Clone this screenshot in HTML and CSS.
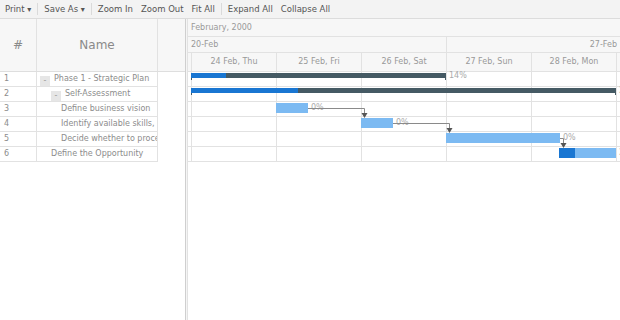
FILE: index.html
```html
<!DOCTYPE html>
<html lang="en">
<head>
  <meta charset="UTF-8">
  <title>Project Gantt</title>
  <link rel="stylesheet" href="styles.css">
</head>
<body>

<div class="toolbar">
  <span class="tb-btn">Print <span class="caret">&#9662;</span></span>
  <span class="tb-sep"></span>
  <span class="tb-btn">Save As <span class="caret">&#9662;</span></span>
  <span class="tb-sep"></span>
  <span class="tb-btn">Zoom In</span>
  <span class="tb-btn">Zoom Out</span>
  <span class="tb-btn">Fit All</span>
  <span class="tb-sep"></span>
  <span class="tb-btn">Expand All</span>
  <span class="tb-btn">Collapse All</span>
</div>

<div class="gantt">

  <!-- data grid -->
  <div class="grid-pane">
    <div class="grid-head">
      <div class="col-num">#</div>
      <div class="col-name">Name</div>
      <div class="col-blank"></div>
    </div>
    <div class="grid-row"><div class="cell-num">1</div><div class="cell-name lvl0"><span class="toggle">-</span>Phase 1 - Strategic Plan</div></div>
    <div class="grid-row"><div class="cell-num">2</div><div class="cell-name lvl1"><span class="toggle">-</span>Self-Assessment</div></div>
    <div class="grid-row"><div class="cell-num">3</div><div class="cell-name lvl2">Define business vision</div></div>
    <div class="grid-row"><div class="cell-num">4</div><div class="cell-name lvl2">Identify available skills, information and support</div></div>
    <div class="grid-row"><div class="cell-num">5</div><div class="cell-name lvl2">Decide whether to proceed</div></div>
    <div class="grid-row"><div class="cell-num">6</div><div class="cell-name lvl1">Define the Opportunity</div></div>
  </div>

  <div class="splitter"></div>

  <!-- timeline -->
  <div class="timeline">
    <div class="tl-month">February, 2000</div>
    <div class="tl-week">
      <div class="week first">20-Feb</div>
      <div class="week last">27-Feb</div>
    </div>
    <div class="tl-days">
      <div class="day part"></div>
      <div class="day">24 Feb, Thu</div>
      <div class="day">25 Feb, Fri</div>
      <div class="day">26 Feb, Sat</div>
      <div class="day">27 Feb, Sun</div>
      <div class="day">28 Feb, Mon</div>
      <div class="day">29 Feb, Tue</div>
    </div>

    <div class="tl-body">
      <div class="tl-row">
        <div class="bar summary" style="left: 3px; width: 255px;"><div class="progress" style="width: 35px;"></div></div>
        <span class="bar-label summary-label" style="left: 261px;">14%</span>
      </div>
      <div class="tl-row">
        <div class="bar summary" style="left: 3px; width: 425px;"><div class="progress" style="width: 107px;"></div></div>
        <span class="bar-label summary-label" style="left: 431px;">25%</span>
      </div>
      <div class="tl-row">
        <div class="bar task" style="left: 88px; width: 32px;"></div>
        <span class="bar-label" style="left: 123px;">0%</span>
      </div>
      <div class="tl-row">
        <div class="bar task" style="left: 173px; width: 32px;"></div>
        <span class="bar-label" style="left: 208px;">0%</span>
      </div>
      <div class="tl-row">
        <div class="bar task" style="left: 258px; width: 114px;"></div>
        <span class="bar-label" style="left: 375px;">0%</span>
      </div>
      <div class="tl-row">
        <div class="bar task" style="left: 371px; width: 57px;"><div class="progress" style="width: 16px;"></div></div>
        <span class="bar-label" style="left: 431px;">28%</span>
      </div>

      <!-- dependency connectors -->
      <svg class="links" width="432" height="100" viewBox="0 0 432 100">
        <g fill="none" stroke="#8a8a8a" stroke-width="1">
          <path d="M120 36.5 H176.5 V42"/>
          <path d="M205 51.5 H261.5 V57"/>
          <path d="M372 66.5 H375.5 V72"/>
        </g>
        <g fill="#555">
          <polygon points="173.5,41 179.5,41 176.5,46"/>
          <polygon points="258.5,56 264.5,56 261.5,61"/>
          <polygon points="372.5,71 378.5,71 375.5,76"/>
        </g>
      </svg>
    </div>
  </div>

</div>

</body>
</html>
```

FILE: styles.css
```css
body {
  margin: 0;
  font-family: "DejaVu Sans", sans-serif;
  color: #8c8c8c;
  background-color: #fff;
  width: 620px;
  height: 320px;
  overflow: hidden;
}
.toolbar {
  height: 18px;
  background-color: #f3f3f3;
  border-bottom: 1px solid #dcdcdc;
  display: flex;
  align-items: center;
  padding-left: 1px;
  font-size: 8.5px;
  color: #555;
  white-space: nowrap;
}
.tb-btn {
  padding: 0 4px;
}
.caret {
  font-size: 8px;
}
.tb-sep {
  width: 1px;
  height: 12px;
  background-color: #dadada;
  margin: 0 2px;
}
.gantt {
  display: flex;
  height: 301px;
}

/* data grid */
.grid-pane {
  width: 185px;
  flex-shrink: 0;
}
.grid-head {
  display: flex;
  height: 52px;
  background-color: #f7f7f7;
  border-bottom: 1px solid #dedede;
  font-size: 12px;
  color: #8a8a8a;
}
.grid-head div {
  display: flex;
  align-items: center;
  justify-content: center;
  box-sizing: border-box;
}
.col-num {
  width: 37px;
  border-right: 1px solid #e2e2e2;
}
.col-name {
  width: 121px;
  border-right: 1px solid #e2e2e2;
}
.col-blank {
  flex: 1;
}
.grid-row {
  display: flex;
  width: 158px;
  height: 14px;
  border-bottom: 1px solid #e2e2e2;
  font-size: 8px;
  line-height: 14px;
}
.cell-num {
  width: 37px;
  box-sizing: border-box;
  padding-left: 4px;
  border-right: 1px solid #e2e2e2;
}
.cell-name {
  width: 121px;
  box-sizing: border-box;
  border-right: 1px solid #e2e2e2;
  white-space: nowrap;
  overflow: hidden;
}
.lvl0 { padding-left: 3px; }
.lvl1 { padding-left: 14px; }
.lvl2 { padding-left: 24px; }
.toggle {
  display: inline-block;
  width: 10px;
  height: 10px;
  margin-right: 4px;
  background-color: #e6e6e6;
  color: #999;
  font-size: 8px;
  line-height: 10px;
  text-align: center;
  vertical-align: -2px;
}
.splitter {
  width: 1px;
  border-left: 1px solid #cfcfcf;
  background-color: #f5f5f5;
  flex-shrink: 0;
}

/* timeline */
.timeline {
  flex: 1;
  border-left: 1px solid #e2e2e2;
  overflow: hidden;
  font-size: 8px;
  color: #999;
}
.tl-month,
.tl-week,
.tl-days {
  background-color: #f7f7f7;
  border-bottom: 1px solid #e2e2e2;
  white-space: nowrap;
}
.tl-month {
  height: 17px;
  line-height: 17px;
  padding-left: 3px;
}
.tl-week {
  display: flex;
  height: 15px;
  line-height: 15px;
}
.week.first {
  width: 259px;
  flex-shrink: 0;
  box-sizing: border-box;
  padding-left: 3px;
  border-right: 1px solid #e2e2e2;
}
.week.last {
  flex: 1;
  text-align: right;
  padding-right: 3px;
}
.tl-days {
  display: flex;
  height: 18px;
  line-height: 18px;
}
.day {
  width: 85px;
  flex-shrink: 0;
  box-sizing: border-box;
  border-right: 1px solid #e2e2e2;
  text-align: center;
}
.day.part {
  width: 4px;
}
.tl-body {
  position: relative;
}
.tl-row {
  position: relative;
  height: 14px;
  border-bottom: 1px solid #e2e2e2;
  background-image: linear-gradient(to right, #e2e2e2 1px, transparent 1px);
  background-size: 85px 100%;
  background-position: 3px 0;
}
.bar {
  position: absolute;
  top: 1px;
  overflow: visible;
}
.bar.summary {
  height: 5px;
  background-color: #455a64;
}
.bar.summary::before,
.bar.summary::after {
  content: "";
  position: absolute;
  top: 5px;
  width: 1px;
  height: 2px;
  background-color: #455a64;
}
.bar.summary::before { left: 0; }
.bar.summary::after { right: 0; }
.bar.task {
  height: 10px;
  background-color: #7cbaf2;
}
.progress {
  height: 100%;
  background-color: #1976d2;
}
.bar-label {
  position: absolute;
  top: 1px;
  line-height: 10px;
  color: #aaa;
  font-size: 8px;
  white-space: nowrap;
}
.summary-label {
  top: -1px;
}
.links {
  position: absolute;
  left: 0;
  top: 0;
}
```
